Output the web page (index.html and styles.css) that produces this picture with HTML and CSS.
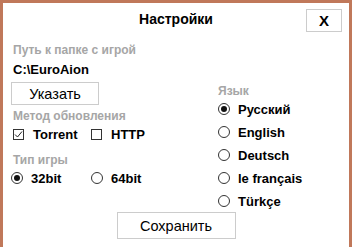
FILE: index.html
```html
<!DOCTYPE html>
<html lang="ru">
<head>
    <meta charset="UTF-8">
    <meta name="viewport" content="width=device-width, initial-scale=1.0">
    <title>Настройки</title>
    <link rel="stylesheet" href="styles.css">
</head>
<body>
    <div class="window">
        <div class="head">
            <span></span>
            <h1>Настройки</h1>
            <button class="close">X</button>
        </div>
        <div class="cols">
            <div class="left">
                <div class="caption first">Путь к папке с игрой</div>
                <div class="path">C:\EuroAion</div>
                <button class="btn pick">Указать</button>
                <div class="caption method">Метод обновления</div>
                <div class="row checks">
                    <label class="opt"><span class="box checked"><svg width="9" height="9" viewBox="0 0 9 9"><path d="M1 4.5 L3.5 7 L8 1.5" fill="none" stroke="#222" stroke-width="1"/></svg></span>Torrent</label>
                    <label class="opt"><span class="box"></span>HTTP</label>
                </div>
                <div class="caption type">Тип игры</div>
                <div class="row radios">
                    <label class="opt"><span class="dot on"></span>32bit</label>
                    <label class="opt"><span class="dot"></span>64bit</label>
                </div>
            </div>
            <div class="right">
                <div class="caption">Язык</div>
                <div class="langs">
                    <label class="opt"><span class="dot on"></span>Русский</label>
                    <label class="opt"><span class="dot"></span>English</label>
                    <label class="opt"><span class="dot"></span>Deutsch</label>
                    <label class="opt"><span class="dot"></span>le français</label>
                    <label class="opt"><span class="dot"></span>Türkçe</label>
                </div>
            </div>
        </div>
        <div class="foot">
            <button class="btn save">Сохранить</button>
        </div>
    </div>
</body>
</html>
```

FILE: styles.css
```css
html, body {
    margin: 0;
    padding: 0;
    background: #ffffff;
}
body {
    font-family: 'Liberation Sans', Arial, sans-serif;
    color: #000000;
}
.window {
    width: 352px;
    height: 247px;
    box-sizing: border-box;
    border: 3px solid #c0785a;
    border-bottom: none;
    display: flex;
    flex-direction: column;
}
.head {
    display: grid;
    grid-template-columns: 1fr auto 1fr;
    align-items: center;
    padding: 6px 7px 0 7px;
}
.head h1 {
    margin: 0;
    font-size: 14px;
    font-weight: bold;
    line-height: 17px;
    margin-top: -2px;
}
.close {
    justify-self: end;
    width: 36px;
    height: 23px;
    padding: 0;
    background: #ffffff;
    border: 1px solid #cccccc;
    font-family: inherit;
    font-size: 15px;
    font-weight: bold;
    color: #000000;
}
.cols {
    flex: 1;
    display: grid;
    grid-template-columns: 215px 1fr;
}
.left {
    padding-left: 10px;
    display: flex;
    flex-direction: column;
    align-items: flex-start;
}
.caption {
    font-size: 12px;
    font-weight: bold;
    line-height: 13px;
    color: #a6a6a6;
}
.caption.first {
    margin-top: 12px;
}
.path {
    margin-top: 5px;
    font-size: 13px;
    font-weight: bold;
    line-height: 15px;
}
.btn {
    background: #ffffff;
    border: 1px solid #cccccc;
    font-family: inherit;
    font-size: 14.5px;
    color: #000000;
    padding: 0;
}
.pick {
    margin-top: 5px;
    margin-left: -2px;
    width: 88px;
    height: 23px;
}
.caption.method {
    margin-top: 5px;
}
.row {
    display: flex;
}
.checks {
    margin-top: 3px;
}
.caption.type {
    margin-top: 12px;
}
.radios {
    margin-top: 3px;
    margin-left: -2px;
}
.opt {
    display: flex;
    align-items: center;
    height: 16px;
    gap: 8px;
    font-size: 13px;
    font-weight: bold;
}
.checks .opt:first-child {
    width: 78px;
}
.radios .opt:first-child {
    width: 80px;
}
.box {
    width: 9px;
    height: 9px;
    border: 1px solid #333333;
    display: flex;
    align-items: center;
    justify-content: center;
    margin-right: 1px;
}
.dot {
    width: 10px;
    height: 10px;
    border: 1px solid #333333;
    border-radius: 50%;
    display: flex;
    align-items: center;
    justify-content: center;
}
.dot.on::after {
    content: '';
    width: 6px;
    height: 6px;
    border-radius: 50%;
    background: #111111;
}
.right {
    padding-top: 53px;
}
.langs {
    margin-top: 3px;
    display: flex;
    flex-direction: column;
    gap: 7px;
}
.foot {
    display: flex;
    justify-content: center;
    padding-bottom: 8px;
}
.save {
    width: 119px;
    height: 27px;
}
```
